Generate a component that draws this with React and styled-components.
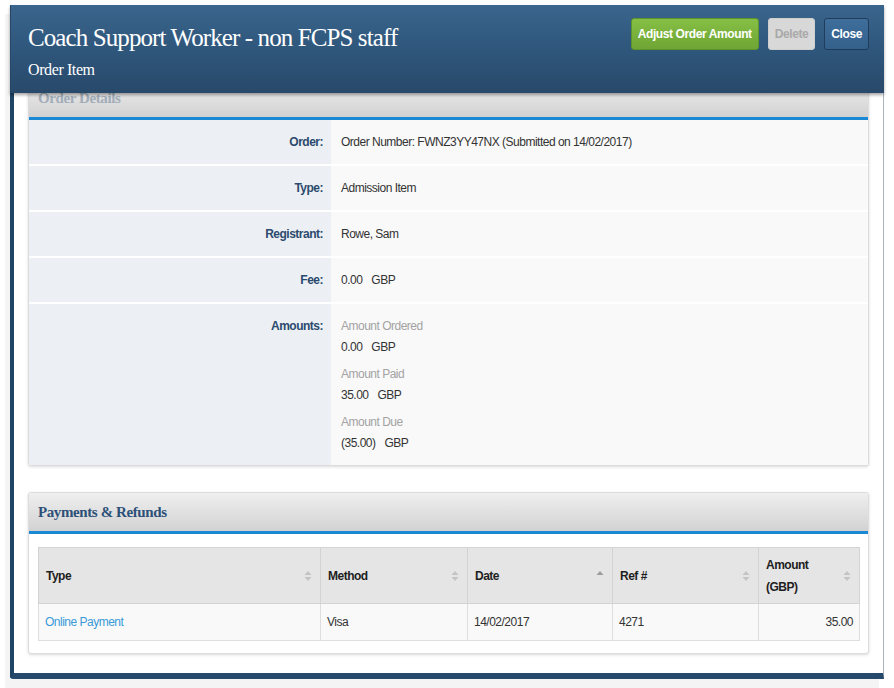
import { useLayoutEffect, useRef } from "react";
import styled, { createGlobalStyle } from "styled-components";

const GlobalStyle = createGlobalStyle`
  html, body {
    margin: 0;
    padding: 0;
    background: #ffffff;
  }
  body {
    font-family: "Liberation Sans", Arial, sans-serif;
    font-size: 12px;
    letter-spacing: -0.5px;
    color: #333333;
  }
`;

const SortIcon = ({ dir }) => (
  <SortSvg viewBox="0 0 8 12" $active={!!dir}>
    {dir !== "desc" && <path d="M4 1 L7.5 5 L0.5 5 Z" />}
    {dir !== "asc" && <path d="M4 11 L7.5 7 L0.5 7 Z" />}
  </SortSvg>
);

function Money({ amount }) {
  return (
    <>
      {amount}
      <Currency>GBP</Currency>
    </>
  );
}

const details = [
  { label: "Order:", value: "Order Number: FWNZ3YY47NX (Submitted on 14/02/2017)" },
  { label: "Type:", value: "Admission Item" },
  { label: "Registrant:", value: "Rowe, Sam" },
  { label: "Fee:", value: <Money amount="0.00" /> },
];

const amounts = [
  { caption: "Amount Ordered", amount: "0.00" },
  { caption: "Amount Paid", amount: "35.00" },
  { caption: "Amount Due", amount: "(35.00)" },
];

const columns = [
  { key: "type", title: "Type", width: 282 },
  { key: "method", title: "Method", width: 147 },
  { key: "date", title: "Date", width: 145, sort: "asc" },
  { key: "ref", title: "Ref #", width: 146 },
  { key: "amount", title: "Amount (GBP)", width: 101 },
];

const payments = [
  { type: "Online Payment", method: "Visa", date: "14/02/2017", ref: "4271", amount: "35.00" },
];

const App = () => {
  const bodyRef = useRef();

  // the dialog body is scrolled a little, so the first panel heading sits under the title bar
  useLayoutEffect(() => {
    if (bodyRef.current) bodyRef.current.scrollTop = 35;
  }, []);

  return (
    <Page>
      <GlobalStyle />
      <Modal>
        <ModalHeader>
          <Titles>
            <Title>Coach Support Worker - non FCPS staff</Title>
            <Subtitle>Order Item</Subtitle>
          </Titles>
          <Actions>
            <Button $variant="success">Adjust Order Amount</Button>
            <Button $variant="disabled" disabled>
              Delete
            </Button>
            <Button $variant="primary">Close</Button>
          </Actions>
        </ModalHeader>

        <ModalBody ref={bodyRef}>
          <Panel>
            <PanelHeading $muted>Order Details</PanelHeading>
            <DetailList>
              {details.map((d) => (
                <DetailRow key={d.label}>
                  <DetailLabel>{d.label}</DetailLabel>
                  <DetailValue>{d.value}</DetailValue>
                </DetailRow>
              ))}
              <DetailRow>
                <DetailLabel>Amounts:</DetailLabel>
                <DetailValue>
                  {amounts.map((a) => (
                    <AmountGroup key={a.caption}>
                      <AmountCaption>{a.caption}</AmountCaption>
                      <div>
                        <Money amount={a.amount} />
                      </div>
                    </AmountGroup>
                  ))}
                </DetailValue>
              </DetailRow>
            </DetailList>
          </Panel>

          <Panel>
            <PanelHeading>Payments &amp; Refunds</PanelHeading>
            <PanelBody>
              <Table>
                <colgroup>
                  {columns.map((c) => (
                    <col key={c.key} style={{ width: c.width }} />
                  ))}
                </colgroup>
                <thead>
                  <tr>
                    {columns.map((c) => (
                      <Th key={c.key}>
                        <ThInner>
                          <span>{c.title}</span>
                          <SortIcon dir={c.sort} />
                        </ThInner>
                      </Th>
                    ))}
                  </tr>
                </thead>
                <tbody>
                  {payments.map((p) => (
                    <tr key={p.ref}>
                      <Td>
                        <TypeLink href="#">{p.type}</TypeLink>
                      </Td>
                      <Td>{p.method}</Td>
                      <Td>{p.date}</Td>
                      <Td>{p.ref}</Td>
                      <Td $right>{p.amount}</Td>
                    </tr>
                  ))}
                </tbody>
              </Table>
            </PanelBody>
          </Panel>
        </ModalBody>
      </Modal>
    </Page>
  );
};

export default App;

/* PAGE + DIALOG FRAME */
const Page = styled.div`
  width: 894px;
  height: 688px;
  padding: 5px 10px 0 10px;
  box-sizing: border-box;
  overflow: hidden;
`;

const Modal = styled.div`
  width: 874px;
  display: flex;
  flex-direction: column;
  box-shadow: -5px 9px 0 #f4f4f4;
`;

const ModalHeader = styled.header`
  position: relative;
  z-index: 2;
  display: flex;
  justify-content: space-between;
  align-items: flex-start;
  height: 88px;
  padding: 0 15px 0 17px;
  box-sizing: border-box;
  background: linear-gradient(to bottom, #3a658c 0%, #2e557a 55%, #28496a 100%);
  border-left: 1px solid #24476a;
  box-shadow: 0 2px 3px rgba(0, 0, 0, 0.35);
`;

const Titles = styled.div`
  padding-top: 16px;
  color: #ffffff;
  font-family: "Liberation Serif", "DejaVu Serif", serif;
`;

const Title = styled.h1`
  margin: 0;
  font-size: 25px;
  font-weight: 400;
  line-height: 34px;
  letter-spacing: -0.9px;
`;

const Subtitle = styled.div`
  margin-top: 5px;
  font-size: 16px;
  line-height: 20px;
  letter-spacing: -0.4px;
`;

const Actions = styled.div`
  display: flex;
  gap: 9px;
  padding-top: 13px;
`;

const buttonColors = {
  success: `
    background: linear-gradient(to bottom, #86bf45, #6ea534);
    border-color: #5f932b;
    color: #ffffff;
  `,
  disabled: `
    background: #d8d8d8;
    border-color: #cfcfcf;
    color: #a9a9a9;
  `,
  primary: `
    background: linear-gradient(to bottom, #3f6e9c, #34608b);
    border-color: #1f3c5a;
    color: #ffffff;
  `,
};

const Button = styled.button`
  height: 32px;
  padding: 0 6px;
  border: 1px solid;
  border-radius: 3px;
  font-family: "Liberation Sans", Arial, sans-serif;
  font-size: 12px;
  font-weight: 700;
  letter-spacing: -0.4px;
  cursor: pointer;
  ${(p) => buttonColors[p.$variant]}
  &:disabled {
    cursor: default;
  }
`;

const ModalBody = styled.div`
  overflow: hidden;
  padding: 20px 14px 20px 14px;
  box-sizing: border-box;
  height: 586px;
  background: #ffffff;
  border-left: 4px solid #1f4466;
  border-right: 1px solid #a9b4bf;
  border-bottom: 6px solid #25486b;
  border-bottom-left-radius: 3px;
  display: flex;
  flex-direction: column;
  gap: 26px;
`;

/* PANELS */
const Panel = styled.section`
  flex-shrink: 0;
  background: #ffffff;
  border: 1px solid #dcdcdc;
  border-radius: 3px;
  box-shadow: 0 1px 3px rgba(0, 0, 0, 0.15);
  overflow: hidden;
`;

const PanelHeading = styled.h2`
  margin: 0;
  height: 38px;
  padding: 0 9px;
  display: flex;
  align-items: center;
  background: linear-gradient(to bottom, #efefef, #d2d2d2);
  border-bottom: 3px solid #1b88d3;
  color: ${(p) => (p.$muted ? "#a2adb9" : "#2d5078")};
  font-family: "Liberation Serif", "DejaVu Serif", serif;
  font-size: 15px;
  font-weight: 700;
  letter-spacing: -0.4px;
`;

const PanelBody = styled.div`
  padding: 13px 9px 12px 9px;
`;

const DetailList = styled.div`
  display: flex;
  flex-direction: column;
  gap: 2px;
  background: #ffffff;
`;

const DetailRow = styled.div`
  display: grid;
  grid-template-columns: 302px 1fr;
`;

const DetailLabel = styled.div`
  padding: 12px 8px 11px 0;
  line-height: 21px;
  text-align: right;
  background: #ecf0f4;
  color: #2b4a6d;
  font-weight: 700;
`;

const DetailValue = styled.div`
  padding: 12px 10px 11px 10px;
  line-height: 21px;
  background: #f9f9f9;
  color: #333333;
`;

const Currency = styled.span`
  margin-left: 9px;
`;

const AmountGroup = styled.div`
  & + & {
    margin-top: 6px;
  }
`;

const AmountCaption = styled.div`
  color: #a3a3a3;
`;

/* PAYMENTS TABLE */
const Table = styled.table`
  width: 100%;
  border-collapse: collapse;
  table-layout: fixed;
`;

const Th = styled.th`
  height: 55px;
  padding: 0 8px 0 7px;
  background: #e5e5e5;
  border: 1px solid #d3d3d3;
  text-align: left;
  font-weight: 700;
  color: #1e1e1e;
  line-height: 22px;
`;

const ThInner = styled.div`
  display: flex;
  align-items: center;
  justify-content: space-between;
  gap: 6px;
`;

const SortSvg = styled.svg`
  width: 8px;
  height: 12px;
  flex-shrink: 0;
  fill: ${(p) => (p.$active ? "#9c9c9c" : "#c4c4c4")};
`;

const Td = styled.td`
  height: 36px;
  padding: 0 6px;
  background: #f9f9f9;
  border: 1px solid #dedede;
  text-align: ${(p) => (p.$right ? "right" : "left")};
  color: #333333;
`;

const TypeLink = styled.a`
  color: #3a9ad8;
  text-decoration: none;
`;
